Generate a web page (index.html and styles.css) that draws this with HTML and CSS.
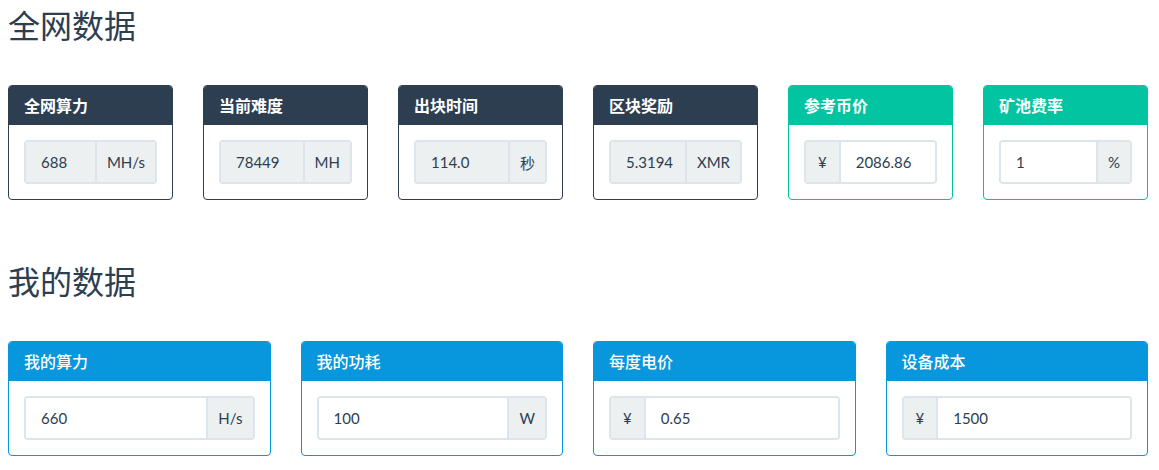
FILE: index.html
```html
<html>
  <head>
    <meta charset="utf-8">
    <link rel="stylesheet" href="styles.css">
    <title>收益计算</title>
  </head>
  <body>
    <div class="container">
      <h2 class="sectionTitle">全网数据</h2>
      <div class="panelRow six">
        <div class="panel dark">
          <div class="panelHeading">全网算力</div>
          <div class="panelBody">
            <div class="inputGroup">
              <input class="field" value="688" readonly>
              <span class="addon">MH/s</span>
            </div>
          </div>
        </div>
        <div class="panel dark">
          <div class="panelHeading">当前难度</div>
          <div class="panelBody">
            <div class="inputGroup">
              <input class="field" value="78449" readonly>
              <span class="addon">MH</span>
            </div>
          </div>
        </div>
        <div class="panel dark">
          <div class="panelHeading">出块时间</div>
          <div class="panelBody">
            <div class="inputGroup">
              <input class="field" value="114.0" readonly>
              <span class="addon">秒</span>
            </div>
          </div>
        </div>
        <div class="panel dark">
          <div class="panelHeading">区块奖励</div>
          <div class="panelBody">
            <div class="inputGroup">
              <input class="field" value="5.3194" readonly>
              <span class="addon">XMR</span>
            </div>
          </div>
        </div>
        <div class="panel green">
          <div class="panelHeading">参考币价</div>
          <div class="panelBody">
            <div class="inputGroup">
              <span class="addon left">¥</span>
              <input class="field" value="2086.86">
            </div>
          </div>
        </div>
        <div class="panel green">
          <div class="panelHeading">矿池费率</div>
          <div class="panelBody">
            <div class="inputGroup">
              <input class="field" value="1">
              <span class="addon">%</span>
            </div>
          </div>
        </div>
      </div>

      <h2 class="sectionTitle second">我的数据</h2>
      <div class="panelRow four">
        <div class="panel blue">
          <div class="panelHeading">我的算力</div>
          <div class="panelBody">
            <div class="inputGroup">
              <input class="field" value="660">
              <span class="addon">H/s</span>
            </div>
          </div>
        </div>
        <div class="panel blue">
          <div class="panelHeading">我的功耗</div>
          <div class="panelBody">
            <div class="inputGroup">
              <input class="field" value="100">
              <span class="addon">W</span>
            </div>
          </div>
        </div>
        <div class="panel blue">
          <div class="panelHeading">每度电价</div>
          <div class="panelBody">
            <div class="inputGroup">
              <span class="addon left">¥</span>
              <input class="field" value="0.65">
            </div>
          </div>
        </div>
        <div class="panel blue">
          <div class="panelHeading">设备成本</div>
          <div class="panelBody">
            <div class="inputGroup">
              <span class="addon left">¥</span>
              <input class="field" value="1500">
            </div>
          </div>
        </div>
      </div>
    </div>
  </body>
</html>
```

FILE: styles.css
```css
* {
  box-sizing: border-box;
}
body {
  margin: 8px;
  background: #fff;
  color: #2c3e50;
  font-family: Lato, "Noto Sans CJK SC", sans-serif;
  font-size: 15px;
}
.container {
  width: 1140px;
}
.sectionTitle {
  margin: 0;
  font-size: 32px;
  font-weight: 400;
  line-height: 35px;
}
.sectionTitle.second {
  margin-top: 64px;
}
.panelRow {
  display: grid;
  column-gap: 30px;
  margin-top: 42px;
}
.panelRow.six {
  grid-template-columns: repeat(6, 1fr);
}
.panelRow.four {
  grid-template-columns: repeat(4, 1fr);
  margin-top: 42px;
}
.panel {
  border: 1px solid #2c3e50;
  border-radius: 4px;
  overflow: hidden;
}
.panelHeading {
  padding: 10px 15px;
  line-height: 19px;
  font-size: 16px;
  font-weight: 700;
  color: #fff;
  background-color: #2c3e50;
}
.panel.green {
  border-color: #02c4a0;
}
.panel.green .panelHeading {
  background-color: #02c4a0;
}
.panel.blue {
  border-color: #0896dc;
}
.panel.blue .panelHeading {
  background-color: #0896dc;
  font-weight: 500;
}
.panelBody {
  padding: 15px;
}
.inputGroup {
  display: flex;
  height: 44px;
  border: 2px solid #dce4ec;
  border-radius: 4px;
  overflow: hidden;
}
.field {
  flex: 1;
  min-width: 0;
  width: 100%;
  border: 0;
  padding: 0 4px 0 15px;
  font-family: Lato, "Noto Sans CJK SC", sans-serif;
  font-size: 15px;
  color: #2c3e50;
  background: #fff;
  outline: none;
}
.field[readonly] {
  background: #ecf0f1;
}
.addon {
  display: flex;
  align-items: center;
  padding: 0 10px;
  background: #ecf0f1;
  border-left: 2px solid #dce4ec;
  white-space: nowrap;
}
.addon.left {
  padding: 0 12px;
  border-left: 0;
  border-right: 2px solid #dce4ec;
}
```
